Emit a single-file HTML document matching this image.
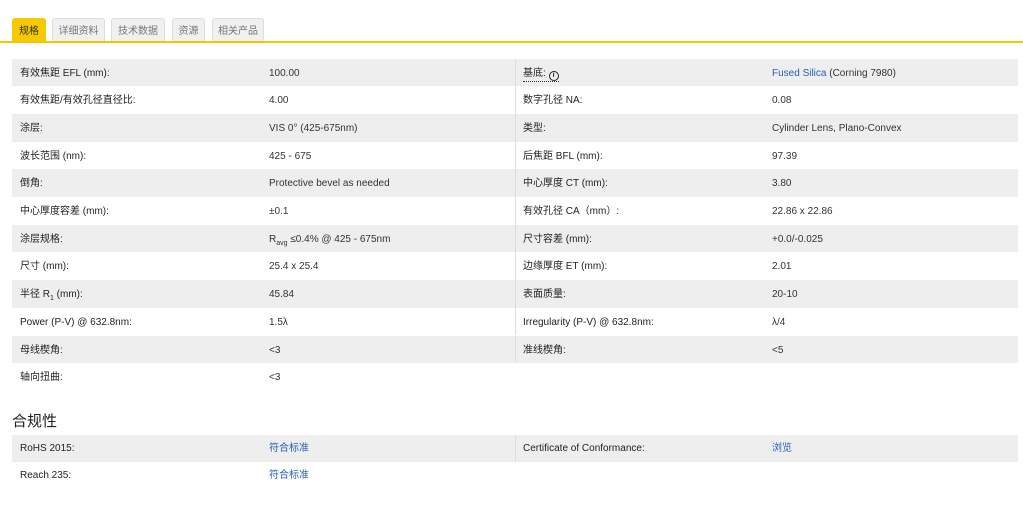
<!DOCTYPE html>
<html><head><meta charset="utf-8"><style>
body{margin:0;width:1023px;height:514px;background:#fff;font-family:"Liberation Sans","Noto Sans CJK SC",sans-serif;font-size:10px;color:#333;position:relative;overflow:hidden}
.tab{position:absolute;top:18px;height:23px;line-height:25px;text-align:center;font-size:10px;color:#777;background:#f0f0f0;border:1px solid #ddd;border-bottom:none;border-radius:3px 3px 0 0;box-sizing:border-box}
.tab.on{background:#f7c900;color:#333;border-color:#f7c900}
.line{position:absolute;left:0;top:41px;width:1023px;height:2px;background:#f2c600}
.row{position:absolute;height:27.7px;line-height:29px;width:503px}
.g{background:#eee}
.row span{position:absolute;white-space:nowrap;top:0}
.l{left:8px;color:#222}.v{left:257px}
.L{left:12px}.R{left:515px;border-left:1px solid #ddd;box-sizing:border-box}
.R .l{left:7px}.R .v{left:256px}
a{color:#2a5db0;text-decoration:none}
h3{position:absolute;left:12px;top:410px;margin:0;font-size:15px;font-weight:normal;color:#222}
sub{font-size:7px;line-height:0}
.i{display:inline-block;width:10px;height:10px;border:1.5px solid #222;border-radius:50%;box-sizing:border-box;font-size:7px;line-height:7px;text-align:center;font-weight:bold;vertical-align:-1px}
</style></head><body>
<div class="tab on" style="left:12px;width:34px">规格</div>
<div class="tab" style="left:52px;width:53px">详细资料</div>
<div class="tab" style="left:111px;width:54px">技术数据</div>
<div class="tab" style="left:172px;width:33px">资源</div>
<div class="tab" style="left:212px;width:52px">相关产品</div>
<div class="line"></div>

<div class="row L g" style="top:58.5px"><span class="l">有效焦距 EFL (mm):</span><span class="v">100.00</span></div>
<div class="row L" style="top:86.2px"><span class="l">有效焦距/有效孔径直径比:</span><span class="v">4.00</span></div>
<div class="row L g" style="top:113.9px"><span class="l">涂层:</span><span class="v">VIS 0° (425-675nm)</span></div>
<div class="row L" style="top:141.6px"><span class="l">波长范围 (nm):</span><span class="v">425 - 675</span></div>
<div class="row L g" style="top:169.3px"><span class="l">倒角:</span><span class="v">Protective bevel as needed</span></div>
<div class="row L" style="top:197px"><span class="l">中心厚度容差 (mm):</span><span class="v">±0.1</span></div>
<div class="row L g" style="top:224.7px"><span class="l">涂层规格:</span><span class="v">R<sub>avg</sub> ≤0.4% @ 425 - 675nm</span></div>
<div class="row L" style="top:252.4px"><span class="l">尺寸 (mm):</span><span class="v">25.4 x 25.4</span></div>
<div class="row L g" style="top:280.1px"><span class="l">半径 R<sub>1</sub> (mm):</span><span class="v">45.84</span></div>
<div class="row L" style="top:307.8px"><span class="l">Power (P-V) @ 632.8nm:</span><span class="v">1.5λ</span></div>
<div class="row L g" style="top:335.5px"><span class="l">母线楔角:</span><span class="v">&lt;3</span></div>
<div class="row L" style="top:363.2px"><span class="l">轴向扭曲:</span><span class="v">&lt;3</span></div>

<div class="row R g" style="top:58.5px"><span class="l" style="border-bottom:1px dotted #333;line-height:13px;top:8px">基底: <b class="i">i</b></span><span class="v"><a>Fused Silica</a> (Corning 7980)</span></div>
<div class="row R" style="top:86.2px"><span class="l">数字孔径 NA:</span><span class="v">0.08</span></div>
<div class="row R g" style="top:113.9px"><span class="l">类型:</span><span class="v">Cylinder Lens, Plano-Convex</span></div>
<div class="row R" style="top:141.6px"><span class="l">后焦距 BFL (mm):</span><span class="v">97.39</span></div>
<div class="row R g" style="top:169.3px"><span class="l">中心厚度 CT (mm):</span><span class="v">3.80</span></div>
<div class="row R" style="top:197px"><span class="l">有效孔径 CA（mm）:</span><span class="v">22.86 x 22.86</span></div>
<div class="row R g" style="top:224.7px"><span class="l">尺寸容差 (mm):</span><span class="v">+0.0/-0.025</span></div>
<div class="row R" style="top:252.4px"><span class="l">边缘厚度 ET (mm):</span><span class="v">2.01</span></div>
<div class="row R g" style="top:280.1px"><span class="l">表面质量:</span><span class="v">20-10</span></div>
<div class="row R" style="top:307.8px"><span class="l">Irregularity (P-V) @ 632.8nm:</span><span class="v">λ/4</span></div>
<div class="row R g" style="top:335.5px"><span class="l">准线楔角:</span><span class="v">&lt;5</span></div>

<h3>合规性</h3>
<div class="row L g" style="top:435px;height:27px;line-height:28px"><span class="l">RoHS 2015:</span><span class="v"><a>符合标准</a></span></div>
<div class="row L" style="top:462px;height:27px;line-height:28px"><span class="l">Reach 235:</span><span class="v"><a>符合标准</a></span></div>
<div class="row R g" style="top:435px;height:27px;line-height:28px"><span class="l">Certificate of Conformance:</span><span class="v"><a>浏览</a></span></div>
</body></html>
